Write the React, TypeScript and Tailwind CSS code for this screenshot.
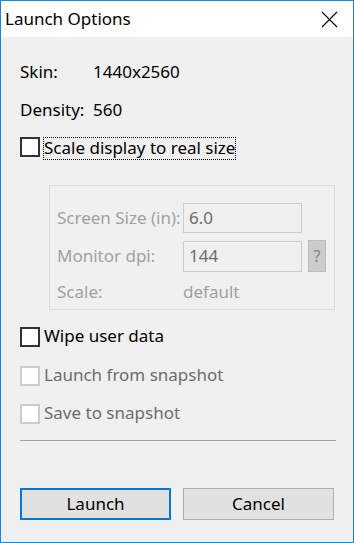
import React from "react";

const font = { fontFamily: '"Segoe UI", "Noto Sans", "Open Sans", sans-serif' };

function Check({ label, disabled, focused }: { label: string; disabled?: boolean; focused?: boolean }) {
  return (
    <div className="flex items-center h-[20px]">
      <div
        className={
          "w-[20px] h-[20px] bg-white shrink-0 border-[2px] " +
          (disabled ? "border-[#cccccc]" : "border-[#333333]")
        }
      />
      <div
        className={
          "ml-[3px] h-[23px] flex items-center leading-none text-[17px] " +
          (focused ? "border border-dotted border-black mt-[3px] " : "border border-transparent ") +
          (disabled ? "text-[#6d6d6d]" : "text-black")
        }
      >
        <span className="-mt-[3px]">{label}</span>
      </div>
    </div>
  );
}

export default function App() {
  return (
    <div
      className="w-[354px] h-[543px] border border-[#1883d7] flex flex-col bg-[#f0f0f0] text-black"
      style={font}
    >
      <div className="h-[36px] bg-white flex items-center shrink-0 relative">
        <span className="pl-[4px] text-[17px] leading-none -mt-[2px]">Launch Options</span>
        <svg className="absolute left-[320px] top-[10px]" width="17" height="17" viewBox="0 0 17 17">
          <path d="M1 1 L16 16 M16 1 L1 16" stroke="#000" strokeWidth="1.1" fill="none" />
        </svg>
      </div>
      <div className="flex flex-col pl-[19px] text-[17px]">
        <div className="mt-[23px] h-[24px] flex items-center">
          <span className="w-[73px]">Skin:</span>
          <span>1440x2560</span>
        </div>
        <div className="mt-[14px] h-[24px] flex items-center">
          <span className="w-[73px]">Density:</span>
          <span>560</span>
        </div>
        <div className="mt-[15px]">
          <Check label="Scale display to real size" focused />
        </div>
        <div className="mt-[28px] ml-[29px] w-[286px] h-[125px] border border-[#dcdcdc] flex flex-col pl-[7px] text-[#a0a0a0]">
          <div className="mt-[17px] flex items-center h-[30px]">
            <span className="w-[126px]">Screen Size (in):</span>
            <div className="w-[119px] h-[30px] border border-[#cccccc] flex items-center pl-[5px] text-[#6d6d6d]">6.0</div>
          </div>
          <div className="mt-[7px] flex items-center h-[32px]">
            <span className="w-[126px]">Monitor dpi:</span>
            <div className="w-[119px] h-[31px] border border-[#cccccc] flex items-center pl-[5px] text-[#6d6d6d]">144</div>
            <div className="ml-[6px] w-[18px] h-[32px] bg-[#cccccc] border border-[#bfbfbf] flex items-center justify-center text-[#838383] text-[16px]">?</div>
          </div>
          <div className="mt-[8px] flex items-center h-[24px]">
            <span className="w-[126px]">Scale:</span>
            <span>default</span>
          </div>
        </div>
        <div className="mt-[17px]">
          <Check label="Wipe user data" />
        </div>
        <div className="mt-[19px]">
          <Check label="Launch from snapshot" disabled />
        </div>
        <div className="mt-[18px]">
          <Check label="Save to snapshot" disabled />
        </div>
        <div className="mt-[16px] w-[316px] h-[1px] bg-[#a0a0a0]" />
        <div className="mt-[47px] flex gap-[12px]">
          <button className="w-[151px] h-[32px] bg-[#e1e1e1] border-[2px] border-[#0078d7] text-[17px] flex items-center justify-center">
            Launch
          </button>
          <button className="w-[151px] h-[32px] bg-[#e1e1e1] border border-[#adadad] text-[17px] flex items-center justify-center">
            Cancel
          </button>
        </div>
      </div>
    </div>
  );
}
